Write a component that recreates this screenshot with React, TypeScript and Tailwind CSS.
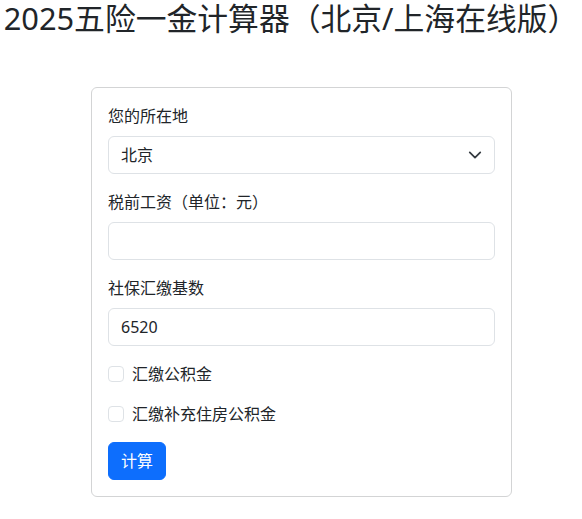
import { useState } from 'react';

const font = { fontFamily: '"Noto Sans", "Noto Sans CJK SC", sans-serif' };

export default function App() {
  const [city, setCity] = useState('北京');
  const [salary, setSalary] = useState('');
  const [base, setBase] = useState('6520');

  return (
    <div className="min-h-[519px] bg-white text-[#212529]" style={font}>
      <h1 className="m-0 text-center text-[30.8px] leading-[1.2] font-normal whitespace-nowrap">
        2025五险一金计算器（北京/上海在线版）
      </h1>

      <div className="mt-[50px] ml-[91px] w-[421px] rounded-md border border-[#d3d4d5] p-4">
        {/* 城市 */}
        <div className="mb-4">
          <label className="mb-2 block text-base leading-6">您的所在地</label>
          <div className="relative">
            <select
              value={city}
              onChange={(e) => setCity(e.target.value)}
              className="block h-[38px] w-full appearance-none rounded-md border border-[#dee2e6] bg-white pl-3 pr-9 text-base leading-6 text-[#212529] outline-none"
            >
              <option>北京</option>
              <option>上海</option>
            </select>
            <svg
              className="pointer-events-none absolute right-[13px] top-1/2 -translate-y-1/2"
              width="14"
              height="14"
              viewBox="0 0 16 16"
              fill="none"
              stroke="#343a40"
              strokeWidth="2"
              strokeLinecap="round"
              strokeLinejoin="round"
            >
              <path d="m2 5 6 6 6-6" />
            </svg>
          </div>
        </div>

        {/* 税前工资 */}
        <div className="mb-4">
          <label className="mb-2 block text-base leading-6">税前工资（单位：元）</label>
          <input
            type="text"
            value={salary}
            onChange={(e) => setSalary(e.target.value)}
            className="block h-[38px] w-full rounded-md border border-[#dee2e6] px-3 text-base leading-6 outline-none"
          />
        </div>

        {/* 社保基数 */}
        <div className="mb-4">
          <label className="mb-2 block text-base leading-6">社保汇缴基数</label>
          <input
            type="text"
            value={base}
            onChange={(e) => setBase(e.target.value)}
            className="block h-[38px] w-full rounded-md border border-[#dee2e6] px-3 text-base leading-6 outline-none"
          />
        </div>

        <label className="mb-4 flex h-6 items-center gap-2 text-base leading-6">
          <input type="checkbox" className="m-0 h-4 w-4 appearance-none rounded border border-[#dee2e6] bg-white" />
          <span>汇缴公积金</span>
        </label>

        <label className="mb-4 flex h-6 items-center gap-2 text-base leading-6">
          <input type="checkbox" className="m-0 h-4 w-4 appearance-none rounded border border-[#dee2e6] bg-white" />
          <span>汇缴补充住房公积金</span>
        </label>

        <button className="h-[38px] rounded-md border border-[#0d6efd] bg-[#0d6efd] px-3 text-base leading-6 text-white">
          计算
        </button>
      </div>
    </div>
  );
}
